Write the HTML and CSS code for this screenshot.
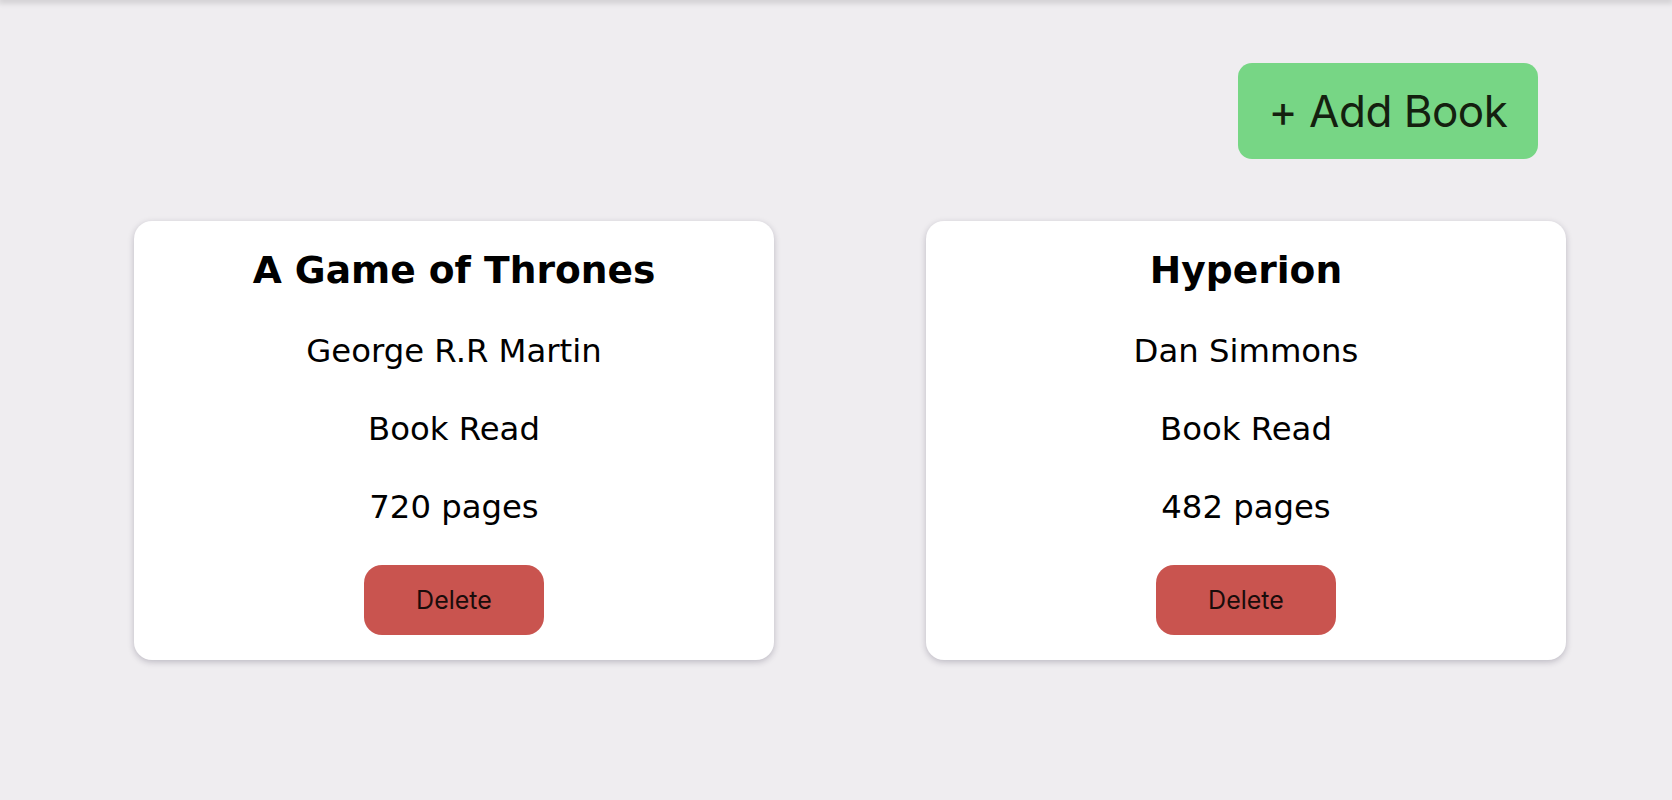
FILE: index.html
```html
<!DOCTYPE html>
<html>
<head>
<meta charset="utf-8">
<link rel="stylesheet" href="styles.css">
</head>
<body>
<div class="topbar"></div>
<div class="toolbar">
  <button class="add-btn">+ Add Book</button>
</div>
<main class="library">
  <div class="card">
    <h2 class="title">A Game of Thrones</h2>
    <p class="line">George R.R Martin</p>
    <p class="line">Book Read</p>
    <p class="line">720 pages</p>
    <button class="del-btn">Delete</button>
  </div>
  <div class="card">
    <h2 class="title">Hyperion</h2>
    <p class="line">Dan Simmons</p>
    <p class="line">Book Read</p>
    <p class="line">482 pages</p>
    <button class="del-btn">Delete</button>
  </div>
</main>
</body>
</html>
```

FILE: styles.css
```css
html, body {
  margin: 0;
  padding: 0;
  background: #efedf0;
  height: 100%;
}
body {
  font-family: "DejaVu Sans", Verdana, sans-serif;
  overflow: hidden;
}
.topbar {
  height: 0;
  box-shadow: 0 0 6px 2px rgba(0,0,0,0.22);
}
.toolbar {
  display: flex;
  justify-content: flex-end;
  padding: 63px 134px 0 0;
}
.add-btn {
  font-family: Inter, "Noto Sans", sans-serif;
  font-size: 44px;
  letter-spacing: -0.5px;
  color: #14200f;
  background: #77d685;
  border: none;
  border-radius: 14px;
  width: 300px;
  height: 96px;
  padding: 0;
}
.library {
  display: grid;
  grid-template-columns: 640px 640px;
  column-gap: 152px;
  padding: 62px 0 0 134px;
}
.card {
  background: #fff;
  border-radius: 18px;
  box-shadow: 0 2px 6px rgba(40, 30, 60, 0.25);
  display: flex;
  flex-direction: column;
  align-items: center;
  gap: 40px;
  padding: 27px 0 25px;
}
.title {
  margin: 0;
  font-size: 37.6px;
  line-height: 44px;
  font-weight: bold;
  color: #000;
}
.line {
  margin: 0;
  font-size: 32.3px;
  line-height: 38px;
  color: #000;
}
.del-btn {
  margin-top: -1px;
  font-family: Inter, "Noto Sans", sans-serif;
  font-size: 25px;
  color: #1a0c0b;
  background: #c9544f;
  border: none;
  border-radius: 18px;
  width: 180px;
  height: 70px;
  padding: 0;
}
```
